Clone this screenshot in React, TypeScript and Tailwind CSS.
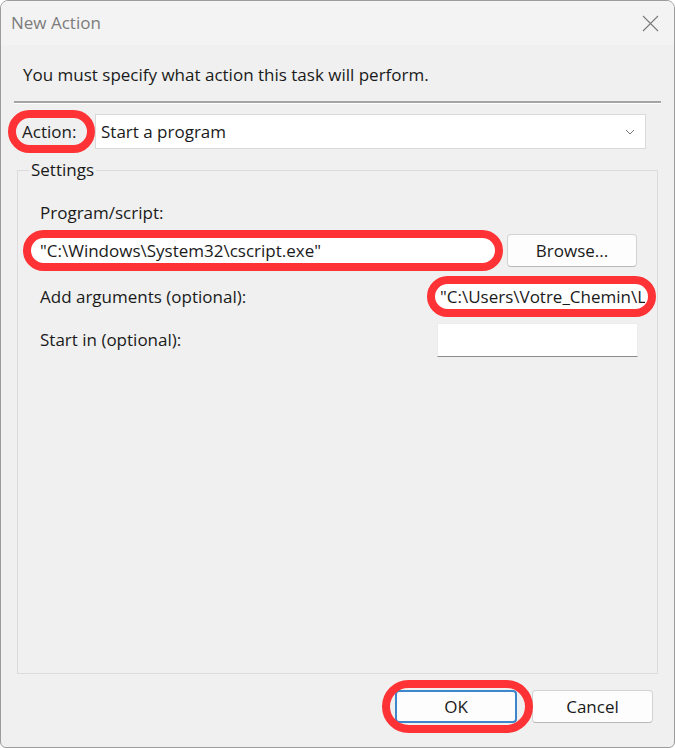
export default function App() {
  return (
    <div className="flex h-[748px] w-[675px] flex-col overflow-hidden rounded-t-[8px] rounded-b-[6px] border border-[#9c9c9c] bg-[#f0f0f0] font-['Open_Sans',sans-serif] text-[17px] leading-[22px] text-[#1a1a1a]">
      {/* title bar */}
      <div className="flex h-[44px] shrink-0 items-center justify-between bg-[#f3f3f3] pl-[10px] pr-[15px]">
        <span className="text-[17px] text-[#7c7c7c]">New Action</span>
        <svg width="17" height="17" viewBox="0 0 17 17" className="text-[#7a7a7a]">
          <path d="M1 1 L16 16 M16 1 L1 16" stroke="currentColor" strokeWidth="1.1" fill="none" />
        </svg>
      </div>

      <p className="mt-[19px] pl-[22px]">You must specify what action this task will perform.</p>

      <div className="mx-[13px] mt-[15px] h-[3px] border-t-2 border-b border-t-[#a5a5a5] border-b-white" />

      {/* action row */}
      <div className="mt-[6px] flex items-center pl-[7px]">
        <div className="flex h-[43px] w-[87px] items-center whitespace-nowrap rounded-full border-[8px] border-[#ff3336] pl-[6px]">
          Action:
        </div>
        <div className="flex h-[35px] w-[551px] items-center justify-between border border-[#d9d9d9] bg-white pl-[5px] pr-[10px]">
          <span>Start a program</span>
          <svg width="10" height="6" viewBox="0 0 10 6">
            <path d="M1 1 L5 5 L9 1" stroke="#7a7a7a" strokeWidth="1" fill="none" />
          </svg>
        </div>
      </div>

      {/* settings group */}
      <fieldset className="mx-[16px] mt-[6px] h-[515px] border border-[#dcdcdc]">
        <legend className="ml-[11px] px-[2px]">Settings</legend>

        <p className="mt-[21px] pl-[22px]">Program/script:</p>

        <div className="mt-[6px] flex items-center pl-[5px]">
          <div className="flex h-[41px] w-[480px] items-center whitespace-nowrap rounded-full border-[8px] border-[#ff3336] bg-white pl-[9px]">
            "C:\Windows\System32\cscript.exe"
          </div>
          <button className="ml-[4px] h-[33px] w-[130px] rounded-[4px] border border-[#d3d3d3] border-b-[#b9b9b9] bg-[#fdfdfd]">
            Browse...
          </button>
        </div>

        <div className="mt-[5px] flex items-center justify-between pl-[22px] pr-[1px]">
          <span>Add arguments (optional):</span>
          <div className="flex h-[41px] w-[229px] items-center overflow-hidden rounded-full border-[8px] border-[#ff3336] bg-white pl-[5px] pr-[3px]">
            <span className="overflow-hidden whitespace-nowrap">"C:\Users\Votre_Chemin\Lo</span>
          </div>
        </div>

        <div className="mt-[6px] flex items-center justify-between pl-[22px] pr-[19px]">
          <span>Start in (optional):</span>
          <div className="h-[34px] w-[201px] border border-[#ececec] border-b-[#8c8c8c] bg-white" />
        </div>
      </fieldset>

      {/* buttons */}
      <div className="mt-[16px] flex justify-end gap-[15px] pr-[21px]">
        <div className="relative">
          <button className="h-[33px] w-[122px] rounded-[4px] border-2 border-[#3d86cc] bg-[#fdfdfd]">OK</button>
          <div className="pointer-events-none absolute -top-[10px] -bottom-[10px] -left-[13px] -right-[16px] rounded-full border-[8px] border-[#ff3336]" />
        </div>
        <button className="h-[33px] w-[121px] rounded-[4px] border border-[#d3d3d3] border-b-[#b9b9b9] bg-[#fdfdfd]">Cancel</button>
      </div>
    </div>
  );
}
